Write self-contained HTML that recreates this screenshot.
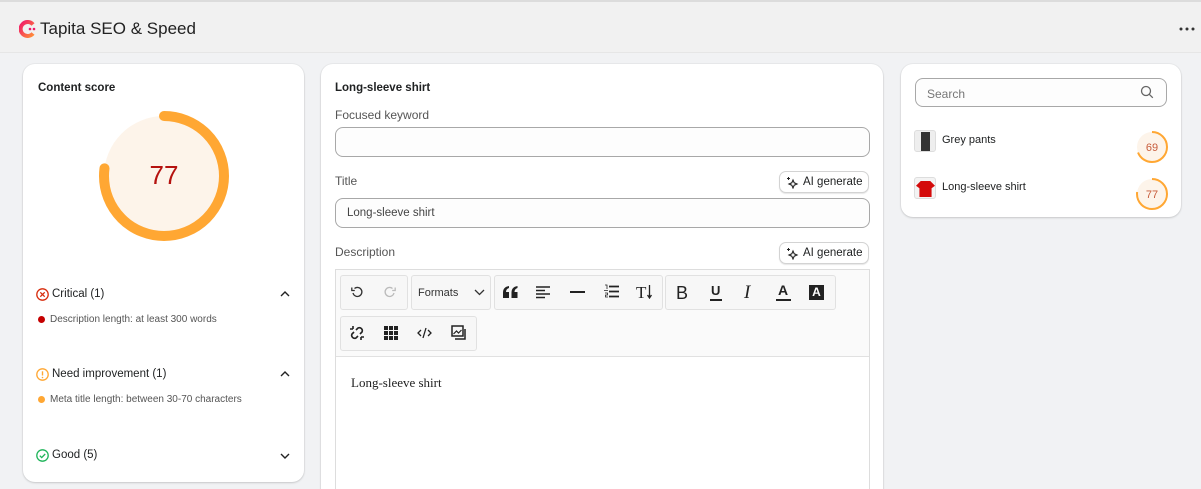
<!DOCTYPE html>
<html><head><meta charset="utf-8"><style>
*{box-sizing:border-box;margin:0;padding:0}
html,body{width:1201px;height:489px;overflow:hidden}
body{background:#f1f2f4;font-family:"Liberation Sans",sans-serif;color:#202223;position:relative}
.hdr{position:absolute;left:0;top:0;width:1201px;height:53px;background:#f1f1f1;border-top:2px solid #dcdcdc;border-bottom:1px solid #e6e6e6}
.card{position:absolute;background:#fff;border-radius:12px;box-shadow:0 1px 2px rgba(0,0,0,.15),0 0 0 1px rgba(0,0,0,.03)}
.abs{position:absolute}
.lbl{position:absolute;font-size:12px;color:#555}
.inp{position:absolute;border:1px solid #a8a8a8;border-radius:8px;background:#fdfdfd}
.ai{position:absolute;height:22px;border:1px solid #d3d3d3;border-radius:7px;font-size:11.5px;padding:4px 6px 0 23px;box-shadow:0 1px 1px rgba(0,0,0,.1);background:#fff}
.grp{position:absolute;border:1px solid #e1e1e1;border-radius:3px;background:#f7f7f7;height:35px}
.ic{position:absolute;font-size:16px;color:#222}
</style></head><body>
<div class="hdr">
 <svg class="abs" style="left:19px;top:18px" width="18" height="18" viewBox="0 0 18 18"><defs><linearGradient id="g" x1="0" y1="0" x2="1" y2="1"><stop offset="0" stop-color="#f0196a"/><stop offset="1" stop-color="#ff8c3a"/></linearGradient></defs><path d="M14 4.5A7 7 0 1 0 14 13.5" fill="none" stroke="url(#g)" stroke-width="4"/><circle cx="11" cy="9" r="1.3" fill="#f0196a"/><circle cx="15" cy="9" r="1.3" fill="#f0196a"/></svg>
 <div class="abs" style="left:40px;top:17px;font-size:17px;color:#222">Tapita SEO &amp; Speed</div>
 <svg class="abs" style="left:1179px;top:25px" width="16" height="4"><circle cx="2" cy="2" r="1.5" fill="#333"/><circle cx="8" cy="2" r="1.5" fill="#333"/><circle cx="14" cy="2" r="1.5" fill="#333"/></svg>
</div>

<div class="card" style="left:23px;top:64px;width:281px;height:418px">
 <div class="abs" style="left:15px;top:18px;font-size:11.5px;font-weight:bold">Content score</div>
 <svg class="abs" style="left:75px;top:46px" width="132" height="132" viewBox="0 0 132 132">
  <circle cx="66" cy="66" r="60" fill="#fdf4ea"/>
  <circle cx="66" cy="66" r="60" fill="none" stroke="#ffa733" stroke-width="10" stroke-linecap="round" stroke-dasharray="290.3 377" transform="rotate(-90 66 66)"/>
  <text x="66" y="74" text-anchor="middle" font-family="Liberation Sans" font-size="26" fill="#b5120f">77</text>
 </svg>
 <svg class="abs" style="left:13px;top:224px" width="13" height="13" viewBox="0 0 13 13"><circle cx="6.5" cy="6.5" r="5.7" fill="none" stroke="#d72c0d" stroke-width="1.3"/><path d="M4.3 4.3l4.4 4.4M8.7 4.3l-4.4 4.4" stroke="#d72c0d" stroke-width="1.3"/></svg>
 <div class="abs" style="left:29px;top:224px;font-size:11.5px">Critical (1)</div>
 <svg class="abs" style="left:257px;top:227px" width="10" height="6"><path d="M1 5l4-4 4 4" fill="none" stroke="#222" stroke-width="1.4"/></svg>
 <div class="abs" style="left:15px;top:252px;width:7px;height:7px;border-radius:50%;background:#c50000"></div>
 <div class="abs" style="left:27px;top:250px;font-size:10px;color:#555">Description length: at least 300 words</div>
 <svg class="abs" style="left:13px;top:304px" width="13" height="13" viewBox="0 0 13 13"><circle cx="6.5" cy="6.5" r="5.7" fill="none" stroke="#ffa733" stroke-width="1.3"/><path d="M6.5 3.3v4.2" stroke="#ffa733" stroke-width="1.4"/><circle cx="6.5" cy="9.5" r=".8" fill="#ffa733"/></svg>
 <div class="abs" style="left:29px;top:304px;font-size:11.5px">Need improvement (1)</div>
 <svg class="abs" style="left:257px;top:307px" width="10" height="6"><path d="M1 5l4-4 4 4" fill="none" stroke="#222" stroke-width="1.4"/></svg>
 <div class="abs" style="left:15px;top:332px;width:7px;height:7px;border-radius:50%;background:#ffa733"></div>
 <div class="abs" style="left:27px;top:330px;font-size:10px;color:#555">Meta title length: between 30-70 characters</div>
 <svg class="abs" style="left:13px;top:385px" width="13" height="13" viewBox="0 0 13 13"><circle cx="6.5" cy="6.5" r="5.7" fill="none" stroke="#1fb45a" stroke-width="1.3"/><path d="M3.8 6.7l1.9 1.9 3.5-3.6" fill="none" stroke="#1fb45a" stroke-width="1.3"/></svg>
 <div class="abs" style="left:29px;top:385px;font-size:11.5px">Good (5)</div>
 <svg class="abs" style="left:257px;top:389px" width="10" height="6"><path d="M1 1l4 4 4-4" fill="none" stroke="#222" stroke-width="1.4"/></svg>
</div>

<div class="card" style="left:321px;top:64px;width:562px;height:440px">
 <div class="abs" style="left:14px;top:18px;font-size:11.5px;font-weight:bold">Long-sleeve shirt</div>
 <div class="lbl" style="left:14px;top:44px">Focused keyword</div>
 <div class="inp" style="left:14px;top:63px;width:535px;height:30px"></div>
 <div class="lbl" style="left:14px;top:110px">Title</div>
 <div class="ai" style="left:458px;top:107px">AI generate</div>
 <svg class="abs" style="left:465px;top:112px" width="13" height="13" viewBox="0 0 13 13"><path d="M7 4l1.2 2.8L11 8 8.2 9.2 7 12 5.8 9.2 3 8l2.8-1.2z" fill="none" stroke="#222" stroke-width="1.1"/><path d="M2.5 1v3M1 2.5h3" stroke="#222" stroke-width="1"/></svg>
 <div class="inp" style="left:14px;top:134px;width:535px;height:30px;font-size:11.5px;color:#444;padding:8px 11px">Long-sleeve shirt</div>
 <div class="lbl" style="left:14px;top:181px">Description</div>
 <div class="ai" style="left:458px;top:178px">AI generate</div>
 <svg class="abs" style="left:465px;top:183px" width="13" height="13" viewBox="0 0 13 13"><path d="M7 4l1.2 2.8L11 8 8.2 9.2 7 12 5.8 9.2 3 8l2.8-1.2z" fill="none" stroke="#222" stroke-width="1.1"/><path d="M2.5 1v3M1 2.5h3" stroke="#222" stroke-width="1"/></svg>
 <div class="abs" style="left:14px;top:205px;width:535px;height:240px;border:1px solid #ddd">
  <div class="abs" style="left:0;top:0;width:533px;height:87px;background:#fafafa;border-bottom:1px solid #e1e1e1">
   <div class="grp" style="left:4px;top:5px;width:68px"></div>
   <svg class="abs" style="left:14px;top:15px" width="14" height="14" viewBox="0 0 14 14"><path d="M3 8a4.5 4.5 0 1 0 1.5-4.5" fill="none" stroke="#333" stroke-width="1.3"/><path d="M1.8 2.5v3h3" fill="none" stroke="#333" stroke-width="1.3"/></svg>
   <svg class="abs" style="left:47px;top:15px" width="14" height="14" viewBox="0 0 14 14"><path d="M11 8a4.5 4.5 0 1 1-1.5-4.5" fill="none" stroke="#bbb" stroke-width="1.3"/><path d="M12.2 2.5v3h-3" fill="none" stroke="#bbb" stroke-width="1.3"/></svg>
   <div class="grp" style="left:75px;top:5px;width:80px"></div>
   <div class="abs" style="left:82px;top:17px;font-size:11px;color:#333">Formats</div>
   <svg class="abs" style="left:138px;top:19px" width="11" height="7"><path d="M1 1l4.5 4.5L10 1" fill="none" stroke="#333" stroke-width="1.3"/></svg>
   <div class="grp" style="left:158px;top:5px;width:169px"></div>
   <svg class="abs" style="left:167px;top:16px" width="15" height="12" viewBox="0 0 15 12"><path d="M0 12V6.5Q0 1 6 0v2Q3 3 3 6h3v6zM8.5 12V6.5Q8.5 1 14.5 0v2Q11.5 3 11.5 6h3v6z" fill="#222"/></svg>
   <svg class="abs" style="left:200px;top:15px" width="14" height="14" viewBox="0 0 14 14"><path d="M0 2h14M0 5.5h9M0 9h14M0 12.5h9" stroke="#222" stroke-width="1.5"/></svg>
   <div class="abs" style="left:234px;top:21px;width:15px;height:2px;background:#222"></div>
   <svg class="abs" style="left:268px;top:14px" width="15" height="15" viewBox="0 0 15 15"><path d="M5 2.5h10M5 7.5h10M5 12.5h10" stroke="#222" stroke-width="1.8"/><path d="M1 1h2v4M0 6.5h4M1 9h2.5v2h-2v2h2.5" fill="none" stroke="#222" stroke-width=".8"/></svg>
   <div class="ic" style="left:300px;top:13px;font-family:'Liberation Serif';font-size:17px">T</div>
   <svg class="abs" style="left:311px;top:15px" width="5" height="14"><path d="M2.5 0v12M0.5 10l2 3 2-3" fill="none" stroke="#222" stroke-width="1.3"/></svg>
   <div class="grp" style="left:329px;top:5px;width:171px"></div>
   <div class="ic" style="left:340px;top:13px;font-size:18px">B</div>
   <div class="ic" style="left:375px;top:13px;font-size:13px;font-weight:bold">U</div>
   <div class="abs" style="left:374px;top:29px;width:12px;height:1.5px;background:#222"></div>
   <div class="ic" style="left:408px;top:12px;font-family:'Liberation Serif';font-style:italic;font-size:19px">I</div>
   <div class="ic" style="left:442px;top:12px;font-size:14px;font-weight:bold">A</div>
   <div class="abs" style="left:440px;top:29px;width:15px;height:2px;background:#222"></div>
   <div class="abs" style="left:473px;top:15px;width:15px;height:15px;background:#222;color:#fff;font-size:12px;font-weight:bold;text-align:center;line-height:15px">A</div>
   <div class="grp" style="left:4px;top:46px;width:137px"></div>
   <svg class="abs" style="left:13px;top:55px" width="16" height="16" viewBox="0 0 16 16"><path d="M7 5l2-2a3 3 0 0 1 4 4l-2 2M9 11l-2 2a3 3 0 0 1-4-4l2-2M1 4h3M4 1v3M12 15v-3M15 12h-3" fill="none" stroke="#222" stroke-width="1.6"/></svg>
   <svg class="abs" style="left:48px;top:56px" width="14" height="14" viewBox="0 0 14 14"><g fill="#222"><rect x="0" y="0" width="4" height="4"/><rect x="5" y="0" width="4" height="4"/><rect x="10" y="0" width="4" height="4"/><rect x="0" y="5" width="4" height="4"/><rect x="5" y="5" width="4" height="4"/><rect x="10" y="5" width="4" height="4"/><rect x="0" y="10" width="4" height="4"/><rect x="5" y="10" width="4" height="4"/><rect x="10" y="10" width="4" height="4"/></g></svg>
   <svg class="abs" style="left:81px;top:57px" width="15" height="12" viewBox="0 0 15 12"><path d="M4 3L1 6l3 3M11 3l3 3-3 3M9 1L6 11" fill="none" stroke="#222" stroke-width="1.3"/></svg>
   <svg class="abs" style="left:115px;top:55px" width="16" height="16" viewBox="0 0 16 16"><rect x="1" y="1" width="11" height="10" fill="none" stroke="#222" stroke-width="1.5"/><path d="M4 14h10V4" fill="none" stroke="#222" stroke-width="1.5"/><path d="M2.5 9l3-3 2 2 3-3" fill="none" stroke="#222" stroke-width="1.2"/></svg>
  </div>
  <div class="abs" style="left:15px;top:105px;font-family:'Liberation Serif',serif;font-size:13px;color:#222">Long-sleeve shirt</div>
 </div>
</div>

<div class="card" style="left:901px;top:64px;width:280px;height:153px">
 <div class="inp" style="left:14px;top:14px;width:252px;height:29px;font-size:12px;color:#777;padding:8px 11px">Search</div>
 <svg class="abs" style="left:239px;top:21px" width="14" height="14" viewBox="0 0 14 14"><circle cx="6" cy="6" r="4.5" fill="none" stroke="#666" stroke-width="1.3"/><path d="M9.3 9.3l3.5 3.5" stroke="#666" stroke-width="1.3"/></svg>
 <div class="abs" style="left:13px;top:66px;width:22px;height:22px;border-radius:3px;background:#eee;border:1px solid #ddd"><div class="abs" style="left:6px;top:1px;width:9px;height:19px;background:#333"></div></div>
 <div class="abs" style="left:41px;top:70px;font-size:11px">Grey pants</div>
 <svg class="abs" style="left:234px;top:66px" width="34" height="34" viewBox="0 0 34 34"><circle cx="17" cy="17" r="15" fill="#fdf4ea"/><circle cx="17" cy="17" r="15" fill="none" stroke="#ffa733" stroke-width="2" stroke-dasharray="65 95" transform="rotate(-90 17 17)"/><text x="17" y="21" text-anchor="middle" font-family="Liberation Sans" font-size="11" fill="#c75b3a">69</text></svg>
 <div class="abs" style="left:13px;top:113px;width:22px;height:22px;border-radius:3px;background:#f3f3f3;border:1px solid #ddd"><div class="abs" style="left:1px;top:3px;width:19px;height:16px;background:#d40b0b;clip-path:polygon(25% 0,75% 0,100% 30%,82% 45%,82% 100%,18% 100%,18% 45%,0 30%)"></div></div>
 <div class="abs" style="left:41px;top:117px;font-size:11px">Long-sleeve shirt</div>
 <svg class="abs" style="left:234px;top:113px" width="34" height="34" viewBox="0 0 34 34"><circle cx="17" cy="17" r="15" fill="#fdf4ea"/><circle cx="17" cy="17" r="15" fill="none" stroke="#ffa733" stroke-width="2" stroke-dasharray="72.6 95" transform="rotate(-90 17 17)"/><text x="17" y="21" text-anchor="middle" font-family="Liberation Sans" font-size="11" fill="#c75b3a">77</text></svg>
</div>
</body></html>
